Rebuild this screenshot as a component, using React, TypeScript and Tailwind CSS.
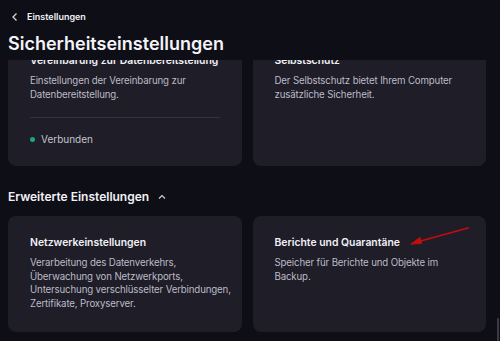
import React from 'react';

const font = { fontFamily: 'Inter, "Noto Sans", sans-serif' };

interface CardProps {
    title: string;
    lines: string[];
    status?: string;
    className?: string;
}

const SettingCard: React.FC<CardProps> = ({ title, lines, status, className = '' }) => (
    <div className={`rounded-[8px] bg-[#1e1d28] pl-[22px] pr-[10px] ${className}`}>
        <h4 className="whitespace-nowrap text-[10.4px] font-semibold leading-[14px] text-[#f1f1f5]">{title}</h4>
        <p className="mt-[6px] whitespace-nowrap text-[9.7px] leading-[13.5px] tracking-[-0.15px] text-[#bcbbc6]">
            {lines.map((line, i) => (
                <React.Fragment key={i}>
                    {i > 0 && <br />}
                    {line}
                </React.Fragment>
            ))}
        </p>
        {status && (
            <>
                <div className="mt-[16px] h-px w-[190px] bg-[#33323e]" />
                <div className="mt-[15px] flex items-center gap-[6px] text-[10px] leading-[13px] text-[#c4c3cc]">
                    <span className="h-[5px] w-[5px] rounded-full bg-[#1ba67c]" />
                    {status}
                </div>
            </>
        )}
    </div>
);

export default function App() {
    return (
        <div style={font} className="relative flex h-[341px] w-[500px] flex-col overflow-hidden bg-[#0e0e16]">
            {/* Header */}
            <div className="z-10 h-[60px] shrink-0 bg-[#0e0e16] px-[8px] pt-[11px]">
                <div className="flex items-center gap-[8px] pl-[3px]">
                    <svg width="8" height="10" viewBox="0 0 8 10" fill="none">
                        <path d="M5.5 1.5 2 5l3.5 3.5" stroke="#d6d6dc" strokeWidth="1.3" />
                    </svg>
                    <span className="text-[9px] font-semibold leading-[12px] text-[#f1f1f5]">Einstellungen</span>
                </div>
                <h1 className="mt-[10px] text-[18px] font-semibold leading-[22px] text-[#f4f4f8]">Sicherheitseinstellungen</h1>
            </div>

            {/* Scrolled content */}
            <div className="flex-1 overflow-hidden pl-[8px] pr-[14px]">
                <div className="-mt-[25px] grid grid-cols-2 gap-[11px]">
                    <SettingCard
                        className="h-[131px] pt-[19px]"
                        title="Vereinbarung zur Datenbereitstellung"
                        lines={['Einstellungen der Vereinbarung zur', 'Datenbereitstellung.']}
                        status="Verbunden"
                    />
                    <SettingCard
                        className="h-[131px] pt-[19px]"
                        title="Selbstschutz"
                        lines={['Der Selbstschutz bietet Ihrem Computer', 'zusätzliche Sicherheit.']}
                    />
                </div>

                <div className="mt-[23px] flex items-center gap-[9px]">
                    <span className="text-[12px] font-semibold leading-[16px] text-[#f1f1f5]">Erweiterte Einstellungen</span>
                    <svg width="8" height="6" viewBox="0 0 8 6" fill="none">
                        <path d="M1 4.5 4 1.5l3 3" stroke="#cfcfd6" strokeWidth="1.2" />
                    </svg>
                </div>

                <div className="mt-[11px] grid grid-cols-2 gap-[11px]">
                    <SettingCard
                        className="h-[116px] pt-[20px]"
                        title="Netzwerkeinstellungen"
                        lines={[
                            'Verarbeitung des Datenverkehrs,',
                            'Überwachung von Netzwerkports,',
                            'Untersuchung verschlüsselter Verbindungen,',
                            'Zertifikate, Proxyserver.',
                        ]}
                    />
                    <SettingCard
                        className="h-[116px] pt-[20px]"
                        title="Berichte und Quarantäne"
                        lines={['Speicher für Berichte und Objekte im', 'Backup.']}
                    />
                </div>
            </div>

            {/* Scrollbar thumb */}
            <div className="absolute right-[1px] top-[318px] h-[23px] w-[2px] rounded-full bg-[#3a3a46]" />

            {/* Annotation arrows */}
            <svg className="pointer-events-none absolute left-0 top-0" width="500" height="341" viewBox="0 0 500 341">
                <g stroke="#c40d0d" strokeWidth="1.8" fill="#c40d0d" strokeLinecap="round">
                    <line x1="287" y1="16" x2="240" y2="35" />
                    <path d="M234 37.5 243.5 30.5 245.5 35.5Z" strokeWidth="1" strokeLinejoin="round" />
                    <line x1="468" y1="228" x2="417" y2="242" />
                    <path d="M411 244 420 237.5 421.5 243Z" strokeWidth="1" strokeLinejoin="round" />
                </g>
            </svg>
        </div>
    );
}
